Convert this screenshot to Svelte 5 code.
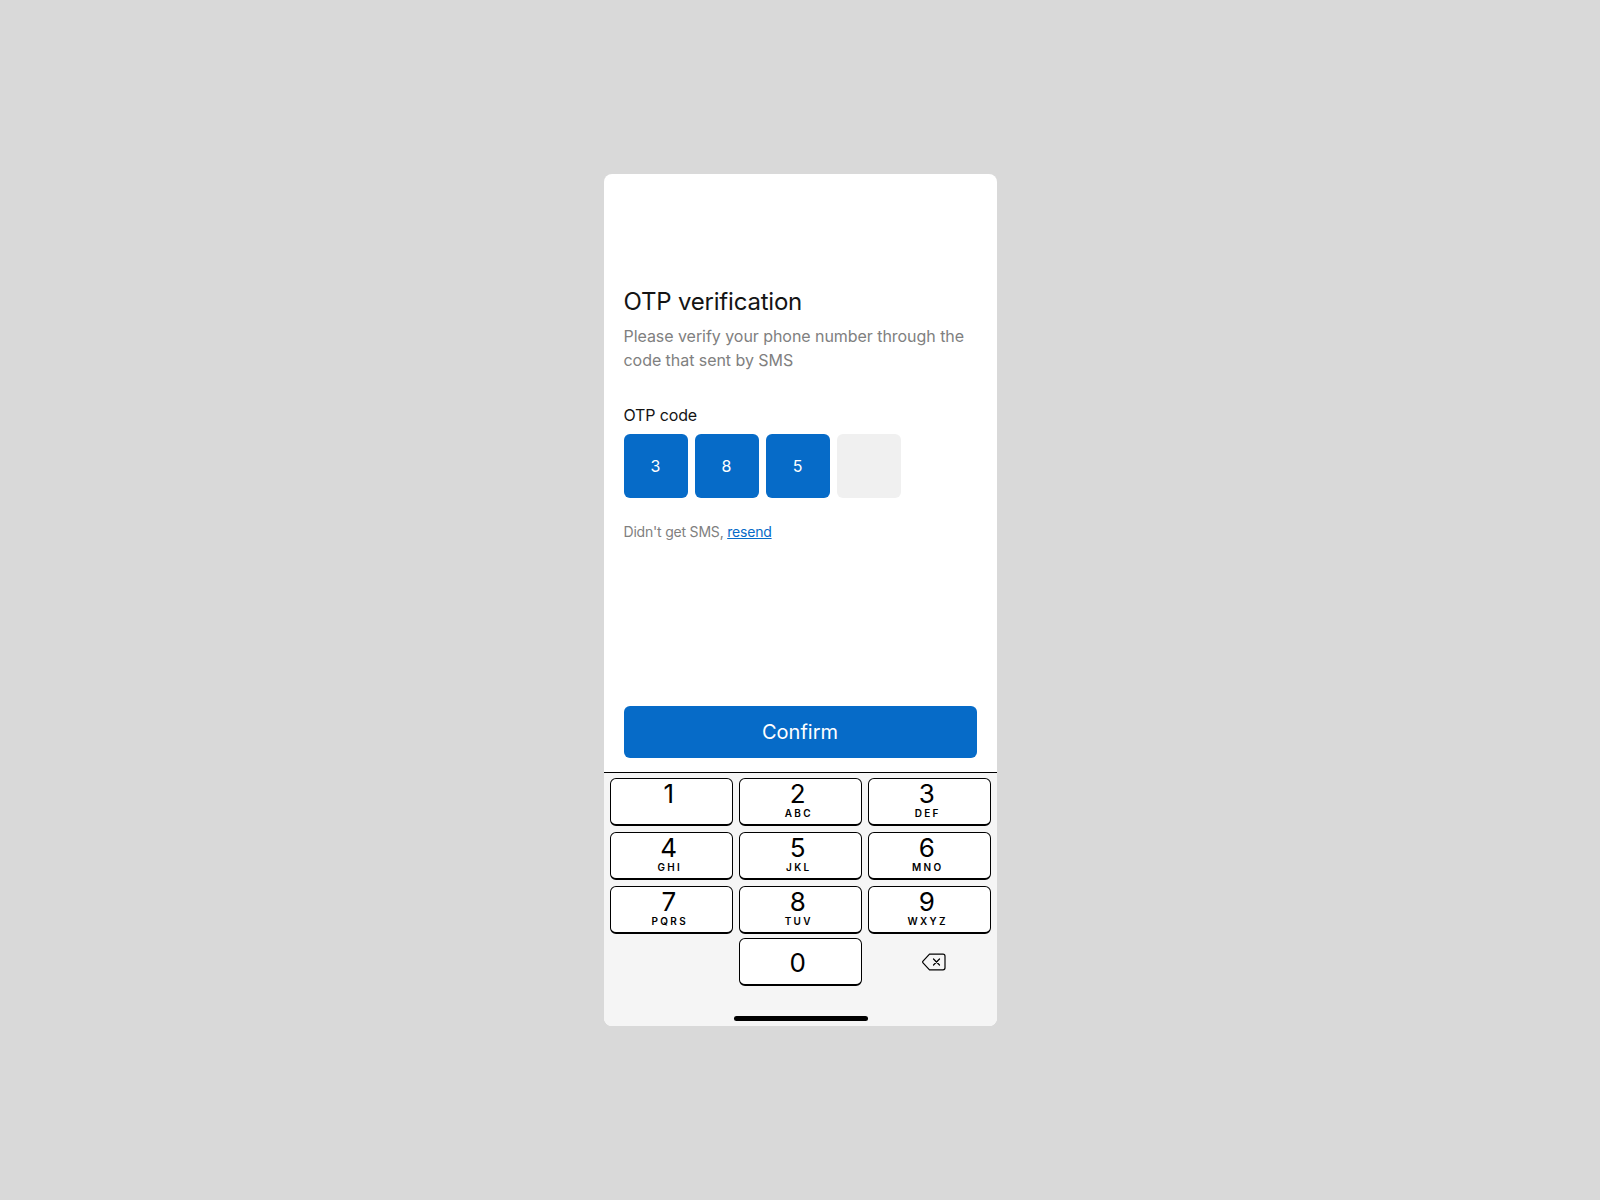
<script>
  const code = ['3', '8', '5', ''];
  const keys = [
    ['1', ''], ['2', 'ABC'], ['3', 'DEF'],
    ['4', 'GHI'], ['5', 'JKL'], ['6', 'MNO'],
    ['7', 'PQRS'], ['8', 'TUV'], ['9', 'WXYZ']
  ];
</script>

<main class="page">
  <section class="phone">
    <div class="content">
      <h1>OTP verification</h1>
      <p class="desc">Please verify your phone number through the code that sent by SMS</p>
      <div class="label">OTP code</div>
      <div class="boxes">
        {#each code as c}
          <div class="box" class:filled={c}>{c}</div>
        {/each}
      </div>
      <p class="resend">Didn't get SMS, <a href="#resend">resend</a></p>
      <button class="confirm">Confirm</button>
    </div>
    <div class="keyboard">
      <div class="grid">
        {#each keys as k}
          <div class="key">
            <span class="num">{k[0]}</span>
            {#if k[1]}<span class="letters">{k[1]}</span>{/if}
          </div>
        {/each}
      </div>
      <div class="grid last">
        <div></div>
        <div class="key zero"><span class="num">0</span></div>
        <div class="back">
          <svg width="24" height="18" viewBox="0 0 24 18" fill="none" stroke="#000" stroke-width="1.2" stroke-linejoin="round" stroke-linecap="round">
            <path d="M7.5 1.2H21a2 2 0 0 1 2 2v11.6a2 2 0 0 1-2 2H7.5L1 9.8a1.2 1.2 0 0 1 0-1.6z" />
            <path d="M11.5 6l6 6M17.5 6l-6 6" />
          </svg>
        </div>
      </div>
      <div class="home"></div>
    </div>
  </section>
</main>

<style>
  :global(body) {
    margin: 0;
    background: #d9d9d9;
  }
  .page {
    height: 1200px;
    display: flex;
    align-items: center;
    justify-content: center;
    font-family: Inter, "Liberation Sans", sans-serif;
  }
  .phone {
    width: 393px;
    height: 852px;
    background: #fff;
    border-radius: 8px;
    overflow: hidden;
    display: flex;
    flex-direction: column;
  }
  .content {
    flex: 1;
    display: flex;
    flex-direction: column;
    padding: 112px 20px 14px;
  }
  h1 {
    margin: 0;
    font-size: 24px;
    line-height: 32px;
    font-weight: 400;
    color: #141414;
    letter-spacing: -0.2px;
  }
  .desc {
    margin: 6px 0 0;
    font-size: 16px;
    line-height: 24px;
    color: #808080;
    letter-spacing: -0.05px;
  }
  .label {
    margin-top: 31px;
    font-size: 16px;
    line-height: 24px;
    color: #141414;
    letter-spacing: -0.15px;
  }
  .boxes {
    display: flex;
    gap: 7px;
    margin-top: 7px;
  }
  .box {
    width: 64px;
    height: 64px;
    box-sizing: border-box;
    padding-bottom: 1px;
    border-radius: 6px;
    background: #f0f0f0;
    color: #fff;
    font-size: 16px;
    display: flex;
    align-items: center;
    justify-content: center;
  }
  .box.filled {
    background: #066bc8;
  }
  .resend {
    margin: 24px 0 0;
    font-size: 14px;
    line-height: 20px;
    color: #808080;
    letter-spacing: -0.2px;
  }
  .resend a {
    color: #066bc8;
  }
  .confirm {
    margin-top: auto;
    height: 52px;
    border: 0;
    border-radius: 6px;
    background: #066bc8;
    color: #fff;
    font: 400 20px Inter, "Liberation Sans", sans-serif;
  }
  .keyboard {
    height: 254px;
    box-sizing: border-box;
    border-top: 1px solid #000;
    background: #f5f5f5;
    padding: 5px 6px 5px 6.5px;
    display: flex;
    flex-direction: column;
  }
  .grid {
    display: grid;
    grid-template-columns: repeat(3, 122.5px);
    column-gap: 6.5px;
    row-gap: 6px;
  }
  .last {
    margin-top: 4px;
  }
  .key {
    height: 48px;
    box-sizing: border-box;
    background: #fff;
    border: 1px solid #000;
    border-bottom-width: 2px;
    border-radius: 6px;
    display: flex;
    flex-direction: column;
    align-items: center;
    padding-right: 5px;
    color: #000;
  }
  .num {
    font-size: 26px;
    line-height: 30px;
  }
  .letters {
    font-size: 10px;
    font-weight: 600;
    line-height: 10px;
    letter-spacing: 2.3px;
    margin-top: -1px;
    margin-left: 2px;
  }
  .zero {
    justify-content: center;
    padding-top: 3px;
  }
  .back {
    display: flex;
    align-items: center;
    justify-content: center;
    padding-left: 9px;
    padding-bottom: 1px;
  }
  .home {
    width: 134px;
    height: 5px;
    border-radius: 3px;
    background: #000;
    margin: auto auto 0;
    transform: translateX(1px);
  }
</style>
